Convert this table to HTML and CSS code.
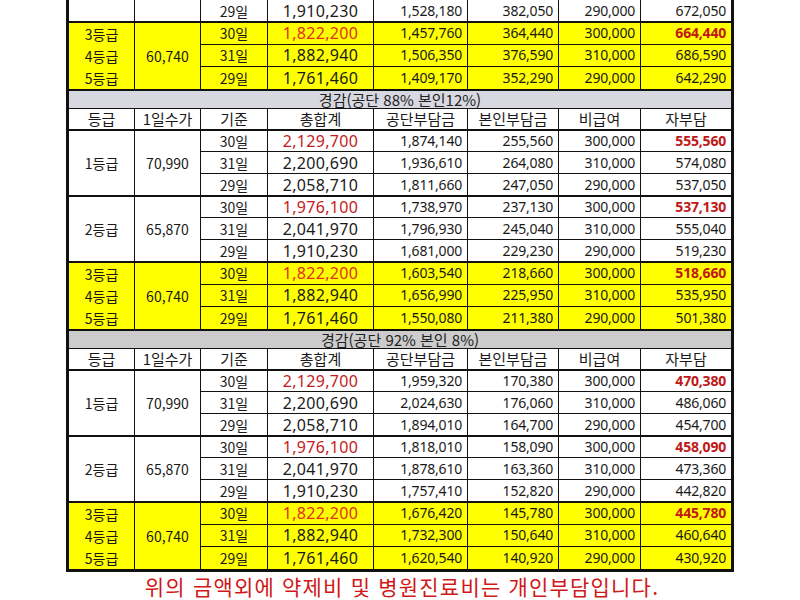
FILE: index.html
```html
<!DOCTYPE html>
<html lang="ko">
<head>
<meta charset="utf-8">
<title>등급별 부담금</title>
<link rel="stylesheet" href="styles.css">
</head>
<body>
<div class="page">
<table class="fee">
<colgroup>
<col class="c-grade"><col class="c-daily"><col class="c-base"><col class="c-total"><col class="c-num"><col class="c-num2"><col class="c-non"><col class="c-self">
</colgroup>
<tbody>
<tr class="first">
<td></td><td></td><td class="day">29일</td><td class="total">1,910,230</td><td class="num">1,528,180</td><td class="num">382,050</td><td class="num">290,000</td><td class="num">672,050</td>
</tr>
<tr class="yellow blk">
<td class="grade" rowspan="3">3등급<br>4등급<br>5등급</td><td class="daily" rowspan="3">60,740</td><td class="day">30일</td><td class="total red">1,822,200</td><td class="num">1,457,760</td><td class="num">364,440</td><td class="num">300,000</td><td class="num self-red">664,440</td>
</tr>
<tr class="yellow"><td class="day">31일</td><td class="total">1,882,940</td><td class="num">1,506,350</td><td class="num">376,590</td><td class="num">310,000</td><td class="num">686,590</td></tr>
<tr class="yellow"><td class="day">29일</td><td class="total">1,761,460</td><td class="num">1,409,170</td><td class="num">352,290</td><td class="num">290,000</td><td class="num">642,290</td></tr>

<tr class="section s1"><td colspan="8">경감(공단 88% 본인12%)</td></tr>
<tr class="head"><td>등급</td><td>1일수가</td><td>기준</td><td>총합계</td><td>공단부담금</td><td>본인부담금</td><td>비급여</td><td>자부담</td></tr>

<tr class="blk"><td class="grade" rowspan="3">1등급</td><td class="daily" rowspan="3">70,990</td><td class="day">30일</td><td class="total red">2,129,700</td><td class="num">1,874,140</td><td class="num">255,560</td><td class="num">300,000</td><td class="num self-red">555,560</td></tr>
<tr><td class="day">31일</td><td class="total">2,200,690</td><td class="num">1,936,610</td><td class="num">264,080</td><td class="num">310,000</td><td class="num">574,080</td></tr>
<tr><td class="day">29일</td><td class="total">2,058,710</td><td class="num">1,811,660</td><td class="num">247,050</td><td class="num">290,000</td><td class="num">537,050</td></tr>

<tr class="blk"><td class="grade" rowspan="3">2등급</td><td class="daily" rowspan="3">65,870</td><td class="day">30일</td><td class="total red">1,976,100</td><td class="num">1,738,970</td><td class="num">237,130</td><td class="num">300,000</td><td class="num self-red">537,130</td></tr>
<tr><td class="day">31일</td><td class="total">2,041,970</td><td class="num">1,796,930</td><td class="num">245,040</td><td class="num">310,000</td><td class="num">555,040</td></tr>
<tr><td class="day">29일</td><td class="total">1,910,230</td><td class="num">1,681,000</td><td class="num">229,230</td><td class="num">290,000</td><td class="num">519,230</td></tr>

<tr class="yellow blk"><td class="grade" rowspan="3">3등급<br>4등급<br>5등급</td><td class="daily" rowspan="3">60,740</td><td class="day">30일</td><td class="total red">1,822,200</td><td class="num">1,603,540</td><td class="num">218,660</td><td class="num">300,000</td><td class="num self-red">518,660</td></tr>
<tr class="yellow"><td class="day">31일</td><td class="total">1,882,940</td><td class="num">1,656,990</td><td class="num">225,950</td><td class="num">310,000</td><td class="num">535,950</td></tr>
<tr class="yellow"><td class="day">29일</td><td class="total">1,761,460</td><td class="num">1,550,080</td><td class="num">211,380</td><td class="num">290,000</td><td class="num">501,380</td></tr>

<tr class="section s2"><td colspan="8">경감(공단 92% 본인 8%)</td></tr>
<tr class="head"><td>등급</td><td>1일수가</td><td>기준</td><td>총합계</td><td>공단부담금</td><td>본인부담금</td><td>비급여</td><td>자부담</td></tr>

<tr class="blk"><td class="grade" rowspan="3">1등급</td><td class="daily" rowspan="3">70,990</td><td class="day">30일</td><td class="total red">2,129,700</td><td class="num">1,959,320</td><td class="num">170,380</td><td class="num">300,000</td><td class="num self-red">470,380</td></tr>
<tr><td class="day">31일</td><td class="total">2,200,690</td><td class="num">2,024,630</td><td class="num">176,060</td><td class="num">310,000</td><td class="num">486,060</td></tr>
<tr><td class="day">29일</td><td class="total">2,058,710</td><td class="num">1,894,010</td><td class="num">164,700</td><td class="num">290,000</td><td class="num">454,700</td></tr>

<tr class="blk"><td class="grade" rowspan="3">2등급</td><td class="daily" rowspan="3">65,870</td><td class="day">30일</td><td class="total red">1,976,100</td><td class="num">1,818,010</td><td class="num">158,090</td><td class="num">300,000</td><td class="num self-red">458,090</td></tr>
<tr><td class="day">31일</td><td class="total">2,041,970</td><td class="num">1,878,610</td><td class="num">163,360</td><td class="num">310,000</td><td class="num">473,360</td></tr>
<tr><td class="day">29일</td><td class="total">1,910,230</td><td class="num">1,757,410</td><td class="num">152,820</td><td class="num">290,000</td><td class="num">442,820</td></tr>

<tr class="yellow blk"><td class="grade" rowspan="3">3등급<br>4등급<br>5등급</td><td class="daily" rowspan="3">60,740</td><td class="day">30일</td><td class="total red">1,822,200</td><td class="num">1,676,420</td><td class="num">145,780</td><td class="num">300,000</td><td class="num self-red">445,780</td></tr>
<tr class="yellow"><td class="day">31일</td><td class="total">1,882,940</td><td class="num">1,732,300</td><td class="num">150,640</td><td class="num">310,000</td><td class="num">460,640</td></tr>
<tr class="yellow"><td class="day">29일</td><td class="total">1,761,460</td><td class="num">1,620,540</td><td class="num">140,920</td><td class="num">290,000</td><td class="num">430,920</td></tr>
</tbody>
</table>
<p class="note">위의 금액외에 약제비 및 병원진료비는 개인부담입니다.</p>
</div>
</body>
</html>
```

FILE: styles.css
```css
html, body {
  margin: 0;
  padding: 0;
  background: #ffffff;
}

.page {
  width: 800px;
  height: 600px;
  overflow: hidden;
  display: flex;
  flex-direction: column;
}

.fee {
  margin-left: 66px;
  width: 667px;
  table-layout: fixed;
  border-collapse: collapse;
  border: 3px solid #111;
  font-family: "Noto Sans", "Noto Sans CJK KR", sans-serif;
  font-size: 14px;
  color: #1a1a1a;
  flex: none;
}

.c-grade { width: 67px; }
.c-daily { width: 66px; }
.c-base { width: 67px; }
.c-total { width: 106px; }
.c-num { width: 94px; }
.c-num2 { width: 91px; }
.c-non { width: 82px; }
.c-self { width: 92px; }

.fee td {
  border: 1px solid #111;
  height: 21px;
  padding: 0;
  line-height: 20px;
  text-align: center;
  white-space: nowrap;
  background: #ffffff;
}

.fee tr.first td {
  border-top: hidden;
}

.fee tr.yellow td {
  background: #ffff00;
}

.fee tr.blk td {
  border-top: 2px solid #111;
  height: 20px;
}

.fee td.grade,
.fee td.daily {
  font-family: "Noto Sans CJK KR", sans-serif;
  font-size: 14px;
  line-height: 22px;
}

.fee td.day {
  font-family: "Noto Sans CJK KR", sans-serif;
  font-size: 14px;
}

.fee td.total {
  font-family: "Noto Sans", sans-serif;
  font-size: 16px;
  letter-spacing: 0.3px;
  color: #1a1a1a;
}

.fee td.total.red {
  color: #c41a1a;
}

.fee tr.yellow td.total.red {
  color: #e0301a;
}

.fee td.num {
  text-align: right;
  padding-right: 5px;
  letter-spacing: -0.2px;
}

.fee td.self-red {
  color: #c01818;
  font-weight: 700;
}

.fee tr.section td {
  height: 17px;
  line-height: 17px;
  font-family: "Noto Sans CJK KR", sans-serif;
  font-size: 15px;
  color: #222;
  border-top: 2px solid #111;
}

.fee tr.s1 td {
  background: #d8d8e0;
}

.fee tr.s2 td {
  background: #cccccc;
}

.fee tr.head td {
  height: 20px;
  font-family: "Noto Sans CJK KR", sans-serif;
  font-size: 15px;
  border-bottom: 2px solid #111;
}

.note {
  margin: 0;
  flex: 1;
  display: flex;
  align-items: center;
  justify-content: center;
  font-family: "Noto Sans CJK KR", sans-serif;
  font-size: 21px;
  line-height: 26px;
  letter-spacing: 1.2px;
  color: #d01818;
  padding-left: 4px;
}
```
